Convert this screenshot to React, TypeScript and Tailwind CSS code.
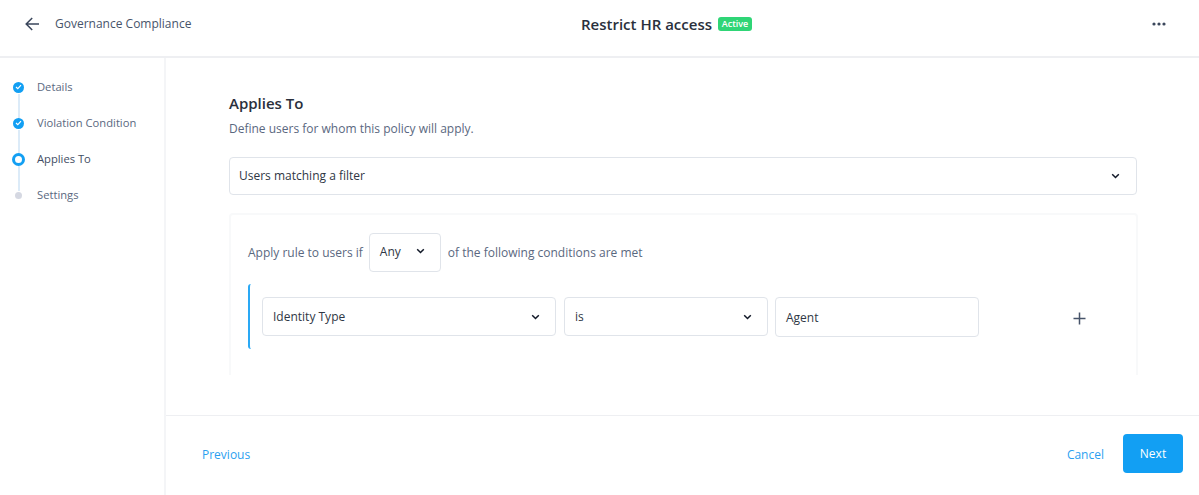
import React from "react";

const Chevron = ({ className = "" }: { className?: string }) => (
  <svg width="9" height="6" viewBox="0 0 9 6" fill="none" className={className}>
    <path d="M1.2 1.2 L4.5 4.5 L7.8 1.2" stroke="#111827" strokeWidth="1.5" />
  </svg>
);

const Check = () => (
  <div className="w-[11px] h-[11px] rounded-full bg-[#129ff3] flex items-center justify-center">
    <svg width="7" height="6" viewBox="0 0 7 6" fill="none">
      <path d="M1 3 L2.8 4.6 L6 1.2" stroke="#fff" strokeWidth="1.2" />
    </svg>
  </div>
);

const Step = ({ label, icon, line, dark }: { label: string; icon: React.ReactNode; line?: boolean; dark?: boolean }) => (
  <div className="relative h-[36px] flex items-center">
    <div className="w-[37px] shrink-0 pl-[12px]">
      <div className="w-[13px] flex justify-center">{icon}</div>
    </div>
    <span className={`text-[11.2px] ${dark ? "text-[#3f4d63]" : "text-[#5a6880]"}`}>{label}</span>
    {line && <div className="absolute left-[17.5px] top-[25px] h-[25px] w-[2px] bg-[#dcebf8]" />}
  </div>
);

export default function App() {
  return (
    <div className="w-[1199px] h-[495px] bg-white flex flex-col overflow-hidden font-['Open_Sans',sans-serif]">
      <header className="h-[58px] shrink-0 flex items-center border-b-2 border-[#eeeff2] pb-[8px]">
        <div className="flex items-center pl-[25px] w-[581px]">
          <svg width="15" height="14" viewBox="0 0 15 14" fill="none">
            <path d="M14 7 H1.5 M7.2 1 L1.2 7 L7.2 13" stroke="#3b475c" strokeWidth="1.5" />
          </svg>
          <span className="ml-[15px] text-[12px] text-[#47546a]">Governance Compliance</span>
        </div>
        <div className="flex items-center">
          <span className="text-[15px] font-semibold text-[#2a303c]">Restrict HR access</span>
          <span className="ml-[6px] h-[14px] w-[34px] flex items-center justify-center rounded-[3px] bg-[#2fd576] text-white text-[9px] font-semibold">Active</span>
        </div>
        <div className="ml-auto flex justify-end pr-[33px]">
          <svg width="14" height="4" viewBox="0 0 14 4" fill="#3b475c">
            <circle cx="2" cy="2" r="1.6" />
            <circle cx="7" cy="2" r="1.6" />
            <circle cx="12" cy="2" r="1.6" />
          </svg>
        </div>
      </header>
      <div className="flex-1 flex min-h-0">
        <aside className="w-[166px] shrink-0 border-r-2 border-[#f4f5f7] pt-[11px]">
          <Step label="Details" icon={<Check />} line />
          <Step label="Violation Condition" icon={<Check />} line />
          <Step label="Applies To" dark icon={<div className="w-[13px] h-[13px] rounded-full border-[3px] border-[#129ff3] bg-white" />} line />
          <Step label="Settings" icon={<div className="w-[7px] h-[7px] rounded-full bg-[#d5d8e2]" />} />
        </aside>
        <main className="flex-1 flex flex-col min-w-0">
          <div className="h-[357px] shrink-0 overflow-hidden">
            <div className="h-[317px] overflow-hidden pl-[63px] pr-[61px] pt-[35px]">
              <h2 className="text-[15px] leading-[20px] font-semibold text-[#2a303c]">Applies To</h2>
              <p className="mt-[7px] text-[12px] leading-[18px] text-[#5a6880]">Define users for whom this policy will apply.</p>
              <div className="mt-[19px] mr-[1px] h-[38px] border border-[#e0e4ea] rounded-[4px] flex items-center justify-between pl-[9px] pr-[16px] text-[12px] text-[#2f3745]">
                <span>Users matching a filter</span>
                <Chevron />
              </div>
              <div className="mt-[18px] h-[200px] rounded-[4px] border-2 border-[#f8f9fa] pl-[17px] pt-[18px]">
                <div className="flex items-center text-[12px] text-[#5a6880]">
                  <span>Apply rule to users if</span>
                  <div className="ml-[6px] w-[72px] h-[39px] border border-[#e0e4ea] rounded-[4px] flex items-start pt-[9px] pl-[10px] text-[#2f3745]">
                    <span>Any</span>
                    <Chevron className="ml-[15px] mt-[5px]" />
                  </div>
                  <span className="ml-[7px]">of the following conditions are met</span>
                </div>
                <div className="mt-[12px] h-[65px] border-l-2 border-[#2aa9f5] rounded-l-[3px] flex items-start pt-[13px] pl-[12px] text-[12px] text-[#2f3745]">
                  <div className="w-[294px] h-[39px] border border-[#e0e4ea] rounded-[4px] flex items-center justify-between pl-[10px] pr-[15px]">
                    <span>Identity Type</span>
                    <Chevron />
                  </div>
                  <div className="ml-[8px] w-[204px] h-[39px] border border-[#e0e4ea] rounded-[4px] flex items-center justify-between pl-[10px] pr-[15px]">
                    <span>is</span>
                    <Chevron />
                  </div>
                  <div className="ml-[7px] w-[204px] h-[40px] border border-[#e0e4ea] rounded-[4px] flex items-center pl-[10px] pt-[1px]">
                    Agent
                  </div>
                  <svg className="ml-[94px] mt-[15px]" width="13" height="13" viewBox="0 0 13 13" fill="none">
                    <path d="M6.5 0.5 V12.5 M0.5 6.5 H12.5" stroke="#47546a" strokeWidth="1.5" />
                  </svg>
                </div>
              </div>
            </div>
          </div>
          <footer className="flex-1 border-t border-[#eeeff2] flex items-center justify-between pl-[36px] pr-[16px] pb-[4px] text-[12px] text-[#2c9ff0]">
            <span className="pt-[2px]">Previous</span>
            <div className="flex items-center">
              <span className="pt-[2px]">Cancel</span>
              <button className="ml-[19px] w-[60px] h-[39px] pt-[1px] rounded-[4px] bg-[#129ff3] text-white font-medium text-[12px]">Next</button>
            </div>
          </footer>
        </main>
      </div>
    </div>
  );
}
